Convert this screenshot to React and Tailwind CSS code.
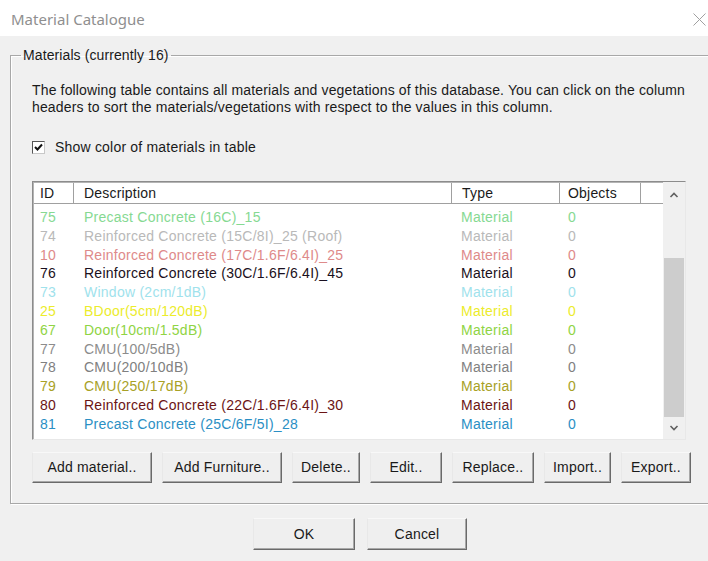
import React from "react";

const rows = [
  { id: "75", desc: "Precast Concrete (16C)_15", color: "#86d992" },
  { id: "74", desc: "Reinforced Concrete (15C/8I)_25 (Roof)", color: "#b9b9b9" },
  { id: "10", desc: "Reinforced Concrete (17C/1.6F/6.4I)_25", color: "#de8a8a" },
  { id: "76", desc: "Reinforced Concrete (30C/1.6F/6.4I)_45", color: "#1a1020" },
  { id: "73", desc: "Window (2cm/1dB)", color: "#9fe2ec" },
  { id: "25", desc: "BDoor(5cm/120dB)", color: "#ecec2c" },
  { id: "67", desc: "Door(10cm/1.5dB)", color: "#8fd444" },
  { id: "77", desc: "CMU(100/5dB)", color: "#8c8c8c" },
  { id: "78", desc: "CMU(200/10dB)", color: "#808080" },
  { id: "79", desc: "CMU(250/17dB)", color: "#a8a126" },
  { id: "80", desc: "Reinforced Concrete (22C/1.6F/6.4I)_30", color: "#6b1414" },
  { id: "81", desc: "Precast Concrete (25C/6F/5I)_28", color: "#2b8fc4" },
];

const actions = [
  { label: "Add material..", w: "w-[120px]" },
  { label: "Add Furniture..", w: "w-[120px]" },
  { label: "Delete..", w: "w-[68px]" },
  { label: "Edit..", w: "w-[72px]" },
  { label: "Replace..", w: "w-[82px]" },
  { label: "Import..", w: "w-[67px]" },
  { label: "Export..", w: "w-[70px]" },
];

function Button({ children, className = "" }) {
  return (
    <button
      className={`h-[31px] bg-[#efefef] border border-t-[#f8f8f8] border-l-[#e8e8e8] border-r-[#6a6a6a] border-b-[#6a6a6a] shadow-[inset_-1px_-1px_0_#a8a8a8] text-[14px] tracking-[0.2px] text-[#1a1a1a] ${className}`}
    >
      {children}
    </button>
  );
}

function HeaderCell({ children, className = "" }) {
  return (
    <div
      className={`h-full flex items-center border-r border-r-[#a0a0a0] shadow-[1px_0_0_#ffffff] ${className}`}
    >
      {children}
    </div>
  );
}

export default function App() {
  return (
    <div
      className="w-[708px] h-[561px] bg-[#f0f0f0] flex flex-col overflow-hidden text-[#1a1a1a]"
      style={{ fontFamily: '"Liberation Sans", Arial, sans-serif' }}
    >
      {/* title bar */}
      <div className="h-[36px] bg-white flex items-center justify-between pl-[11px] pr-[1px] shrink-0">
        <span
          className="text-[15px] text-[#8f8f8f] pt-[2px]"
          style={{ fontFamily: '"Noto Sans", "Open Sans", sans-serif' }}
        >
          Material Catalogue
        </span>
        <svg width="15" height="15" viewBox="0 0 15 15" className="mt-[2px]">
          <path d="M1.5 1.5 L13.5 13.5 M13.5 1.5 L1.5 13.5" stroke="#a0a0a0" strokeWidth="1" fill="none" />
        </svg>
      </div>

      {/* group box */}
      <fieldset className="ml-[10px] mt-[11px] w-[694px] h-[457px] border border-[#a8a8a8] shadow-[inset_1px_1px_0_#ffffff,1px_1px_0_#ffffff] px-[21px] flex flex-col">
        <legend className="-ml-[11px] px-[2px] text-[14px] tracking-[0.1px] leading-[16px]">
          Materials (currently 16)
        </legend>

        <p className="mt-[19px] text-[14px] leading-[17px] tracking-[0.15px]">
          The following table contains all materials and vegetations of this database. You can click on the column headers to sort the materials/vegetations with respect to the values in this column.
        </p>

        <label className="mt-[23px] flex items-center h-[17px] gap-[10px] text-[14px] tracking-[0.2px]">
          <span className="w-[13px] h-[13px] bg-white border border-[#555] border-r-[#c8c8c8] border-b-[#c8c8c8] flex items-center justify-center">
            <svg width="11" height="11" viewBox="0 0 11 11">
              <path d="M2 5 L4.5 7.5 L9 2.5" stroke="#111" strokeWidth="2" fill="none" />
            </svg>
          </span>
          Show color of materials in table
        </label>

        {/* list view */}
        <div className="mt-[25px] w-[654px] h-[259px] flex bg-white border border-t-[#8c8c8c] border-l-[#8c8c8c] border-r-[#e8e8e8] border-b-[#e8e8e8] shadow-[inset_1px_1px_0_#b4b4b4]">
          <div className="flex-1 flex flex-col pl-[1px] pt-[1px]">
            <div className="h-[21px] flex text-[14px] tracking-[0.2px] border-b border-b-[#a0a0a0] shrink-0">
              <HeaderCell className="w-[40px] pl-[6px]">ID</HeaderCell>
              <HeaderCell className="w-[378px] pl-[10px]">Description</HeaderCell>
              <HeaderCell className="w-[108px] pl-[10px]">Type</HeaderCell>
              <HeaderCell className="w-[81px] pl-[8px]">Objects</HeaderCell>
              <div className="flex-1" />
            </div>
            <div className="pt-[4px] flex flex-col">
              {rows.map((r) => (
                <div
                  key={r.id}
                  className="h-[18.8px] leading-[18.8px] flex text-[14px] tracking-[0.25px]"
                  style={{ color: r.color }}
                >
                  <span className="w-[40px] pl-[6px]">{r.id}</span>
                  <span className="w-[378px] pl-[10px] whitespace-nowrap">{r.desc}</span>
                  <span className="w-[108px] pl-[9px]">Material</span>
                  <span className="w-[81px] pl-[8px]">0</span>
                </div>
              ))}
            </div>
          </div>

          {/* scrollbar */}
          <div className="w-[22px] bg-[#f0f0f0] flex flex-col items-center">
            <div className="h-[22px] w-full flex items-center justify-center mt-[2px]">
              <svg width="10" height="8" viewBox="0 0 10 8">
                <path d="M1.5 6 L5 2.5 L8.5 6" stroke="#606060" strokeWidth="1.6" fill="none" />
              </svg>
            </div>
            <div className="mt-[52px] w-[20px] h-[159px] bg-[#cdcdcd]" />
            <div className="flex-1 w-full flex items-center justify-center">
              <svg width="10" height="8" viewBox="0 0 10 8">
                <path d="M1.5 2 L5 5.5 L8.5 2" stroke="#606060" strokeWidth="1.6" fill="none" />
              </svg>
            </div>
          </div>
        </div>

        {/* action buttons */}
        <div className="mt-[12px] flex gap-[10px]">
          {actions.map((a) => (
            <Button key={a.label} className={a.w}>
              {a.label}
            </Button>
          ))}
        </div>
      </fieldset>

      {/* dialog buttons */}
      <div className="mt-[14px] flex gap-[12px] pl-[253px]">
        <Button className="w-[102px] h-[32px]">OK</Button>
        <Button className="w-[100px] h-[32px]">Cancel</Button>
      </div>
    </div>
  );
}
